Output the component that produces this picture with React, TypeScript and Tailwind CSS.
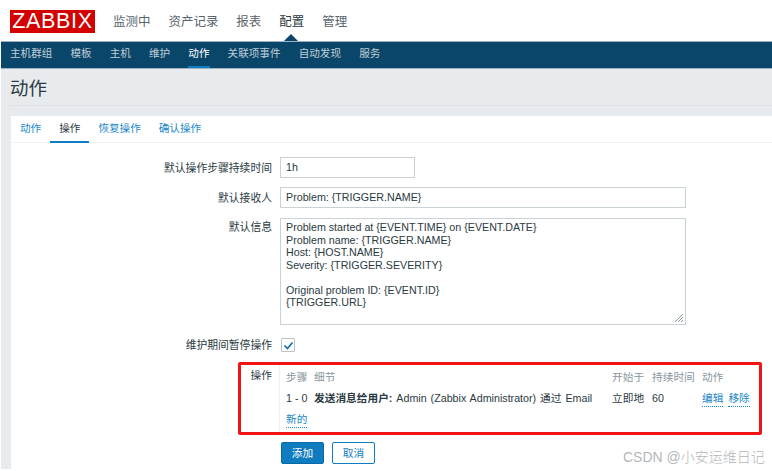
const font = "font-['Liberation_Sans','Noto_Sans_CJK_SC',sans-serif]";

const mainMenu = [
  { label: '监测中', active: false },
  { label: '资产记录', active: false },
  { label: '报表', active: false },
  { label: '配置', active: true },
  { label: '管理', active: false },
];

const subMenu = ['主机群组', '模板', '主机', '维护', '动作', '关联项事件', '自动发现', '服务'];

const tabs = ['动作', '操作', '恢复操作', '确认操作'];

const message = `Problem started at {EVENT.TIME} on {EVENT.DATE}
Problem name: {TRIGGER.NAME}
Host: {HOST.NAME}
Severity: {TRIGGER.SEVERITY}

Original problem ID: {EVENT.ID}
{TRIGGER.URL}`;

function Label({ children }: { children: React.ReactNode }) {
  return <div className="w-[272px] shrink-0 text-right text-[10.8px] leading-[14px] text-[#2b3a42]">{children}</div>;
}

export default function App() {
  return (
    <div className={`${font} relative h-[471px] w-[772px] overflow-hidden whitespace-nowrap bg-white`}>
      {/* Top menu */}
      <header className="relative flex h-[41px] items-start pl-[10px] pt-[10px]">
        <div className="flex h-[23px] w-[85px] items-center justify-center bg-[#d40000] text-[21.5px] leading-none tracking-[0.7px] text-white">
          ZABBIX
        </div>
        <nav className="ml-[18px] flex gap-[17.9px] pt-[3px] text-[12.5px] leading-[18px] text-[#59656c]">
          {mainMenu.map((m) => (
            <span key={m.label} className={m.active ? 'text-[#2b3a42]' : ''}>
              {m.label}
            </span>
          ))}
        </nav>
        <div className="absolute bottom-0 left-[284px] h-0 w-0 border-x-[7px] border-b-[7px] border-x-transparent border-b-[#0a466a]" />
      </header>

      {/* Sub menu */}
      <nav className="ml-px flex h-[28px] gap-[18.1px] border-y border-y-[#9fb2bd] bg-[#0a466a] pl-[9px] text-[10.6px] text-[#c0ced6]">
        {subMenu.map((s) => (
          <span
            key={s}
            className={`flex h-[26px] items-center border-b-2 ${s === '动作' ? 'border-[#0f7cc4] text-white' : 'border-transparent'}`}
          >
            {s}
          </span>
        ))}
      </nav>

      <main className="ml-px h-[400px] bg-[#e8ebee] pl-[10px]">
        <h1 className="ml-[-1px] flex h-[37px] items-center border-b border-[#dde1e5] pt-[3px] text-[18.5px] font-normal text-[#2b3a42]">
          动作
        </h1>

        <section className="mt-[10px] h-[353px] bg-white">
          {/* Tabs */}
          <div className="flex h-[27px] border-b border-[#eef0f2] text-[10.6px] text-[#1b87c9]">
            {tabs.map((t) => (
              <span
                key={t}
                className={`flex h-[27px] items-center border-b-2 px-[9px] ${t === '操作' ? 'border-[#0f7cc4] text-[#2b3a42]' : 'border-transparent'}`}
              >
                {t}
              </span>
            ))}
          </div>

          {/* Form */}
          <div className="ml-[-11px] flex flex-col pt-[14px] text-[10.7px] text-[#2b3a42]">
            <div className="flex items-center gap-[8px]">
              <Label>默认操作步骤持续时间</Label>
              <div className="flex h-[21px] w-[135px] items-center border border-[#c9d2d7] px-[5px]">1h</div>
            </div>
            <div className="mt-[9px] flex items-center gap-[8px]">
              <Label>默认接收人</Label>
              <div className="flex h-[21px] w-[406px] items-center border border-[#c9d2d7] px-[5px]">Problem: {'{TRIGGER.NAME}'}</div>
            </div>
            <div className="mt-[10px] flex items-start gap-[8px]">
              <div className="pt-[2px]">
                <Label>默认信息</Label>
              </div>
              <div className="relative h-[107px] w-[406px] whitespace-pre-line border border-[#c9d2d7] px-[5px] pt-[2px] leading-[12.5px]">
                {message}
                <svg className="absolute bottom-[1px] right-[1px]" width="10" height="10" viewBox="0 0 10 10" stroke="#8a949b" strokeWidth="1">
                  <path d="M1 9 9 1M4 9l5-5M7 9l2-2" />
                </svg>
              </div>
            </div>
            <div className="mt-[13px] flex items-center gap-[9px]">
              <Label>维护期间暂停操作</Label>
              <div className="flex h-[14px] w-[14px] items-center justify-center rounded-[1px] border border-[#b8c4cb]">
                <svg width="11" height="11" viewBox="0 0 11 11" fill="none" stroke="#0f6fb0" strokeWidth="1.7">
                  <path d="M1.5 5.5 4.5 8.5 9.5 2.5" />
                </svg>
              </div>
            </div>

            {/* Highlighted operations block */}
            <div className="ml-[238px] mt-[10px] flex h-[73px] w-[524px] rounded-[2px] border-[3px] border-[#f01414] pl-[8px]">
              <div className="w-[23px] shrink-0 pt-[3px] text-right leading-[14px]">操作</div>
              <div className="ml-[7px] w-[475px] border-l border-[#eef0f2] pl-[6px]">
                <div className="grid grid-cols-[28px_298px_40px_50px_46px] pt-[5px] leading-[15px] text-[#8a969d]">
                  <span>步骤</span>
                  <span>细节</span>
                  <span>开始于</span>
                  <span>持续时间</span>
                  <span>动作</span>
                </div>
                <div className="mt-[5px] grid grid-cols-[28px_298px_40px_50px_46px] leading-[16px]">
                  <span>1 - 0</span>
                  <span className="[word-spacing:1px]">
                    <b>发送消息给用户:</b> Admin (Zabbix Administrator) 通过 Email
                  </span>
                  <span>立即地</span>
                  <span>60</span>
                  <span className="flex gap-[5px] text-[#1b87c9]">
                    <span className="border-b border-dotted border-[#1b87c9]">编辑</span>
                    <span className="border-b border-dotted border-[#1b87c9]">移除</span>
                  </span>
                </div>
                <div className="mt-[5px] flex leading-[15px] text-[#1b87c9]">
                  <span className="border-b border-dotted border-[#1b87c9]">新的</span>
                </div>
              </div>
            </div>

            {/* Buttons */}
            <div className="ml-[281px] mt-[7px] flex gap-[8px]">
              <button className="h-[22px] w-[43px] rounded-[2px] border border-[#0a6aa8] bg-[#0f7cc0] text-white">添加</button>
              <button className="h-[22px] w-[43px] rounded-[2px] border border-[#0f7cc0] bg-white text-[#0f7cc0]">取消</button>
            </div>
          </div>
        </section>
      </main>

      {/* Watermark */}
      <div className="absolute left-[623px] top-[449px] text-[14px] font-light leading-[16px] text-[#b4b7ba]">CSDN @小安运维日记</div>
    </div>
  );
}
